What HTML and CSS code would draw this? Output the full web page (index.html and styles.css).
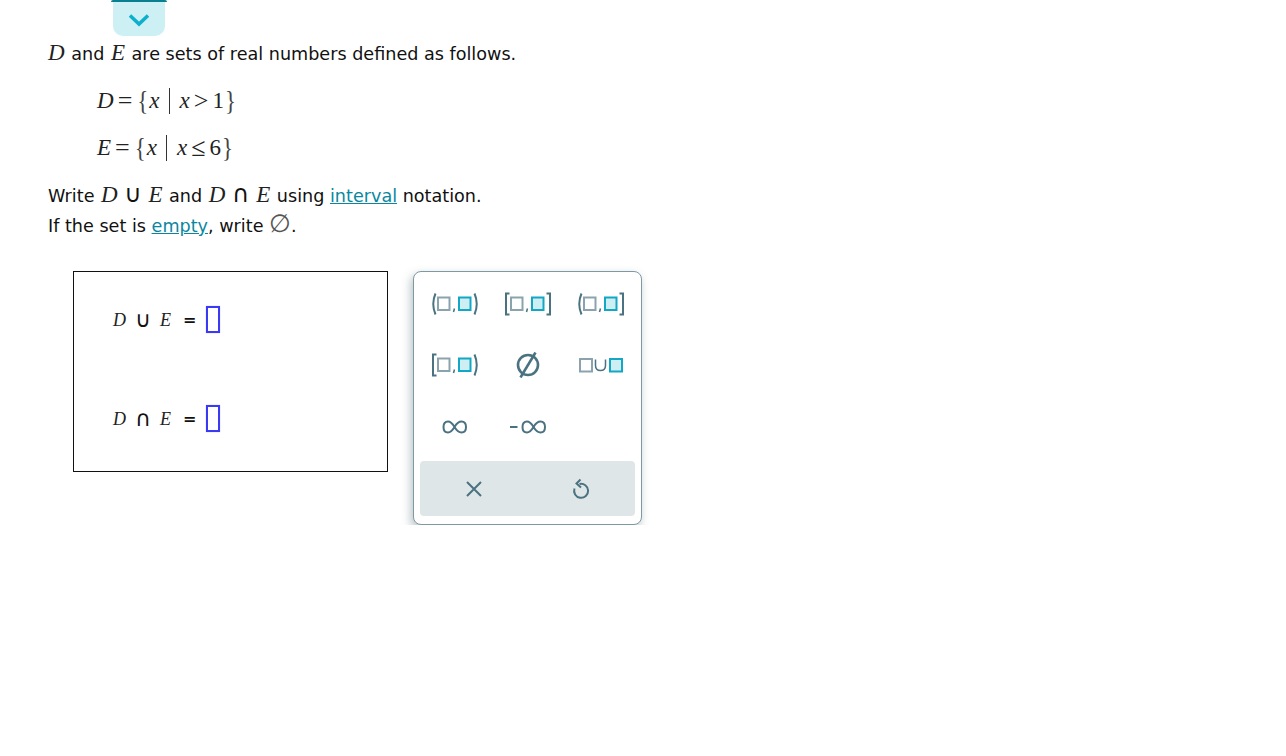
FILE: index.html
```html
<!DOCTYPE html>
<html lang="en">
<head>
    <meta charset="UTF-8">
    <meta name="viewport" content="width=device-width, initial-scale=1.0">
    <title>Set notation</title>
    <link rel="stylesheet" href="styles.css">
</head>
<body>

    <div class="tab-top">
        <div class="tab">
            <svg width="22" height="14" viewBox="0 0 22 14"><path d="M2 2.500 L11 11 L20 2.500" fill="none" stroke="#0cb0cc" stroke-width="3.500"/></svg>
        </div>
    </div>

    <div class="question">
        <p class="intro"><i class="m">D</i> and <i class="m">E</i> are sets of real numbers defined as follows.</p>

        <div class="equation"><i>D</i><span class="eq">=</span><span class="brace">{</span><i>x</i><span class="bar"></span><i>x</i><span class="eq">&gt;</span>1<span class="brace">}</span></div>
        <div class="equation"><i>E</i><span class="eq">=</span><span class="brace">{</span><i>x</i><span class="bar"></span><i>x</i><span class="eq">≤</span>6<span class="brace">}</span></div>

        <p class="line first">Write <i class="m">D</i> <span class="op">∪</span> <i class="m">E</i> and <i class="m">D</i> <span class="op">∩</span> <i class="m">E</i> using <a href="#">interval</a> notation.</p>
        <p class="line">If the set is <a href="#">empty</a>, write <span class="empty">∅</span>.</p>
    </div>

    <div class="work">
        <div class="answers">
            <div class="answer"><i class="m2">D</i><span class="op2">∪</span><i class="m2">E</i><span class="equals">=</span><span class="slot"></span></div>
            <div class="answer"><i class="m2">D</i><span class="op2">∩</span><i class="m2">E</i><span class="equals">=</span><span class="slot"></span></div>
        </div>

        <div class="palette">
            <div class="keys">
                <button class="key">
                    <svg width="50" height="24" viewBox="0 0 50 24">
                        <path class="ink" d="M5.500 1.500 Q1 12 5.500 22.500"/>
                        <rect class="box" x="8" y="5.500" width="11.500" height="12.500"/>
                        <path class="ink thin" d="M24.500 16.500 L23.500 20"/>
                        <rect class="box-on" x="29" y="5.500" width="11.500" height="12.500"/>
                        <path class="ink" d="M44.500 1.500 Q49 12 44.500 22.500"/>
                    </svg>
                </button>
                <button class="key">
                    <svg width="50" height="24" viewBox="0 0 50 24">
                        <path class="ink" d="M6.500 1.500 H3 V22.500 H6.500"/>
                        <rect class="box" x="8" y="5.500" width="11.500" height="12.500"/>
                        <path class="ink thin" d="M24.500 16.500 L23.500 20"/>
                        <rect class="box-on" x="29" y="5.500" width="11.500" height="12.500"/>
                        <path class="ink" d="M43.500 1.500 H47 V22.500 H43.500"/>
                    </svg>
                </button>
                <button class="key">
                    <svg width="50" height="24" viewBox="0 0 50 24">
                        <path class="ink" d="M5.500 1.500 Q1 12 5.500 22.500"/>
                        <rect class="box" x="8" y="5.500" width="11.500" height="12.500"/>
                        <path class="ink thin" d="M24.500 16.500 L23.500 20"/>
                        <rect class="box-on" x="29" y="5.500" width="11.500" height="12.500"/>
                        <path class="ink" d="M43.500 1.500 H47 V22.500 H43.500"/>
                    </svg>
                </button>
                <button class="key">
                    <svg width="50" height="24" viewBox="0 0 50 24">
                        <path class="ink" d="M6.500 1.500 H3 V22.500 H6.500"/>
                        <rect class="box" x="8" y="5.500" width="11.500" height="12.500"/>
                        <path class="ink thin" d="M24.500 16.500 L23.500 20"/>
                        <rect class="box-on" x="29" y="5.500" width="11.500" height="12.500"/>
                        <path class="ink" d="M44.500 1.500 Q49 12 44.500 22.500"/>
                    </svg>
                </button>
                <button class="key">
                    <svg width="26" height="26" viewBox="0 0 26 26">
                        <circle class="ink heavy" cx="13" cy="13" r="10"/>
                        <path class="ink heavy" d="M20.500 0.500 L5.500 25.500"/>
                    </svg>
                </button>
                <button class="key">
                    <svg width="46" height="16" viewBox="0 0 46 16">
                        <rect class="box" x="2" y="2" width="12" height="12.500"/>
                        <path class="ink thin" d="M17.500 2.500 V8.500 Q17.500 13.500 22.500 13.500 Q27.500 13.500 27.500 8.500 V2.500"/>
                        <rect class="box-on" x="32" y="2" width="12" height="12.500"/>
                    </svg>
                </button>
                <button class="key low">
                    <svg width="26" height="14" viewBox="0 0 26 14">
                        <path class="ink" d="M12.500 7 C9.500 2 7.500 1.500 6 1.500 C3 1.500 1.500 4 1.500 7 C1.500 10 3 12.500 6 12.500 C7.500 12.500 9.500 12 12.500 7 C15.500 2 17.500 1.500 19.500 1.500 C22.500 1.500 24 4 24 7 C24 10 22.500 12.500 19.500 12.500 C17.500 12.500 15.500 12 12.500 7 Z"/>
                    </svg>
                </button>
                <button class="key low">
                    <svg width="40" height="14" viewBox="0 0 40 14">
                        <path class="ink" d="M2 7 H9.500"/>
                        <path class="ink" d="M25.500 7 C22.500 2 20.500 1.500 19 1.500 C16 1.500 14.500 4 14.500 7 C14.500 10 16 12.500 19 12.500 C20.500 12.500 22.500 12 25.500 7 C28.500 2 30.500 1.500 32.500 1.500 C35.500 1.500 37 4 37 7 C37 10 35.500 12.500 32.500 12.500 C30.500 12.500 28.500 12 25.500 7 Z"/>
                    </svg>
                </button>
            </div>
            <div class="actions">
                <button class="key">
                    <svg width="18" height="18" viewBox="0 0 18 18"><path class="ink" d="M2 2 L16 16 M16 2 L2 16"/></svg>
                </button>
                <button class="key">
                    <svg width="20" height="22" viewBox="0 0 20 22">
                        <path class="ink" d="M8.500 6 A7 7 0 1 1 3.500 10.500"/>
                        <path class="ink" d="M9.500 1.500 L5.500 5.500 L10 9.500"/>
                    </svg>
                </button>
            </div>
        </div>
    </div>

</body>
</html>
```

FILE: styles.css
```css
body {
    margin: 0;
    background-color: white;
    color: #111;
    font-family: "DejaVu Sans", Verdana, sans-serif;
    font-size: 17.6px;
}
p {
    margin: 0;
}
a {
    color: #0a87a0;
}
.tab-top {
    width: 56px;
    margin-left: 111px;
    border-top: 2px solid #0a7f90;
    border-radius: 2px;
}
.tab {
    height: 34px;
    margin: 0 2px;
    background-color: #ccf0f4;
    border-radius: 0 0 10px 10px;
    display: flex;
    justify-content: center;
    align-items: center;
}
.tab svg {
    margin-top: 2px;
}
.question {
    padding-left: 48px;
}
.intro {
    margin-top: 5px;
    line-height: 24px;
    margin-left: -1px;
}
.m, .m2 {
    font-family: "Liberation Serif", serif;
    font-size: 23px;
    line-height: 1;
    color: #222;
}
.m {
    padding: 0 1px;
}
.op {
    font-size: 24px;
    line-height: 1;
    font-weight: normal;
}
.equation {
    font-family: "Liberation Serif", serif;
    font-size: 23px;
    color: #222;
    height: 47px;
    line-height: 47px;
    padding-left: 49px;
    display: flex;
    align-items: center;
}
.intro + .equation {
    margin-top: 11px;
}
.eq {
    margin: 0 4px;
    font-size: 26px;
}
.brace {
    margin: 0 1px;
    color: #444;
    transform: scale(1, 1.2);
}
.bar {
    width: 1px;
    height: 26px;
    background-color: #333;
    margin: 0 10px 0 9px;
}
.line {
    line-height: 30px;
}
.first {
    margin-top: 10px;
}
.empty {
    font-family: "Liberation Serif", serif;
    font-size: 25px;
    line-height: 1;
    color: #555;
}
.work {
    display: flex;
    align-items: flex-start;
    gap: 25px;
    margin-top: 30px;
    margin-left: 73px;
}
.answers {
    box-sizing: border-box;
    width: 315px;
    height: 201px;
    border: 1px solid #111;
    padding: 33px 0 0 39px;
}
.answer {
    display: flex;
    align-items: center;
    height: 29px;
    margin-bottom: 70px;
}
.m2 {
    font-size: 18px;
}
.op2 {
    margin: 0 9px;
    font-size: 22px;
    line-height: 1;
}
.equals {
    margin: 0 9px 0 12px;
    font-size: 16px;
    font-weight: bold;
}
.slot {
    box-sizing: border-box;
    width: 14px;
    height: 27px;
    border: 2px solid #3a3af5;
    box-shadow: 0 0 1px #a9a9ff;
}
.palette {
    box-sizing: border-box;
    width: 229px;
    height: 254px;
    border: 1px solid #7f99a3;
    border-radius: 8px;
    padding: 1px 6px 7px;
    background-color: white;
    box-shadow: -2px 4px 10px rgba(50, 80, 90, 0.35);
}
.keys {
    display: grid;
    grid-template-columns: repeat(3, 1fr);
    grid-auto-rows: 61px;
    margin: 0 -2px 5px;
    height: 183px;
}
.key {
    border: none;
    background: none;
    padding: 0;
    display: flex;
    align-items: center;
    justify-content: center;
}
.key.low {
    padding-top: 3px;
}
.actions {
    display: grid;
    grid-template-columns: 1fr 1fr;
    height: 55px;
    background-color: #dfe6e8;
    border-radius: 4px;
}
.ink {
    fill: none;
    stroke: #4a7280;
    stroke-width: 2;
}
.thin {
    stroke-width: 1.500;
}
.heavy {
    stroke-width: 2.600;
}
.box {
    fill: white;
    stroke: #8aa3ad;
    stroke-width: 2;
}
.box-on {
    fill: #cdeef3;
    stroke: #12a7c4;
    stroke-width: 2;
}
```
